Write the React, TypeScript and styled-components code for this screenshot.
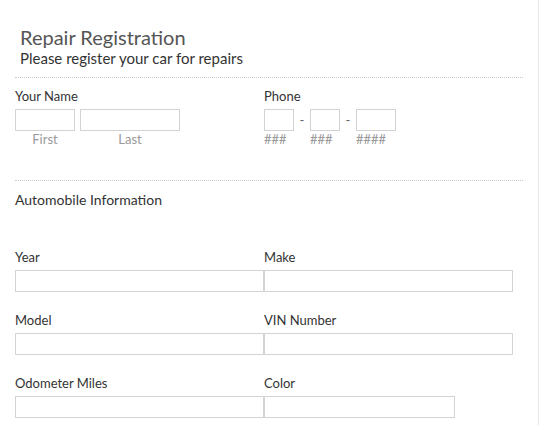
import React from "react";
import styled, { createGlobalStyle } from "styled-components";

const Global = createGlobalStyle`
  html, body { margin: 0; padding: 0; background: #fff; }
  body { font-family: Lato, "Open Sans", Arial, sans-serif; color: #333; }
  * { box-sizing: border-box; }
`;

const Page = styled.div`
  width: 539px;
  min-height: 425px;
  border-right: 1px solid #e6e6e6;
  padding-left: 15px;
`;

const Form = styled.form`
  width: 508px;
`;

const Header = styled.header`
  padding: 24px 0 10px 5px;
  border-bottom: 1px dotted #c8c8c8;
`;

const Title = styled.h1`
  margin: 0;
  font-size: 20px;
  line-height: 26px;
  font-weight: 400;
  color: #555;
`;

const Subtitle = styled.p`
  margin: 0;
  font-size: 15px;
  line-height: 17px;
  color: #333;
`;

const Section = styled.section<{ $divider?: boolean }>`
  padding-top: 10px;
  padding-bottom: ${(p) => (p.$divider ? "33px" : "0")};
  border-bottom: ${(p) => (p.$divider ? "1px dotted #c8c8c8" : "none")};
`;

const Grid = styled.div`
  display: grid;
  grid-template-columns: 249px 249px;
`;

const Field = styled.div``;

const Label = styled.label`
  display: block;
  font-size: 13px;
  line-height: 16px;
  color: #333;
  margin-bottom: 5px;
`;

const Heading = styled.h2`
  margin: 0 0 41px;
  font-size: 14px;
  line-height: 17px;
  font-weight: 400;
  color: #333;
`;

const Input = styled.input<{ $w?: number }>`
  display: block;
  width: ${(p) => (p.$w ? `${p.$w}px` : "100%")};
  height: 22px;
  border: 1px solid #d3d3d3;
  padding: 0 4px;
  margin: 0;
  font: inherit;
  background: #fff;
  outline: none;
`;

const Parts = styled.div`
  display: flex;
  align-items: flex-start;
`;

const Part = styled.div<{ $center?: boolean }>`
  display: flex;
  flex-direction: column;
  align-items: ${(p) => (p.$center ? "center" : "flex-start")};
`;

const Sub = styled.span`
  font-size: 13px;
  line-height: 16px;
  color: #9a9a9a;
`;

const Dash = styled.span`
  width: 16px;
  height: 22px;
  line-height: 22px;
  text-align: center;
  font-size: 13px;
  color: #666;
`;

const Gap = styled.span`
  width: 5px;
`;

const Row = styled.div`
  display: grid;
  grid-template-columns: 249px 249px;
  margin-bottom: 20px;
`;

export default function App() {
  return (
    <>
      <Global />
      <Page>
        <Form>
          <Header>
            <Title>Repair Registration</Title>
            <Subtitle>Please register your car for repairs</Subtitle>
          </Header>
          <Section $divider>
            <Grid>
              <Field>
                <Label>Your Name</Label>
                <Parts>
                  <Part $center>
                    <Input $w={60} />
                    <Sub>First</Sub>
                  </Part>
                  <Gap />
                  <Part $center>
                    <Input $w={100} />
                    <Sub>Last</Sub>
                  </Part>
                </Parts>
              </Field>
              <Field>
                <Label>Phone</Label>
                <Parts>
                  <Part>
                    <Input $w={30} />
                    <Sub>###</Sub>
                  </Part>
                  <Dash>-</Dash>
                  <Part>
                    <Input $w={30} />
                    <Sub>###</Sub>
                  </Part>
                  <Dash>-</Dash>
                  <Part>
                    <Input $w={40} />
                    <Sub>####</Sub>
                  </Part>
                </Parts>
              </Field>
            </Grid>
          </Section>
          <Section>
            <Heading>Automobile Information</Heading>
            <Row>
              <Field>
                <Label>Year</Label>
                <Input />
              </Field>
              <Field>
                <Label>Make</Label>
                <Input />
              </Field>
            </Row>
            <Row>
              <Field>
                <Label>Model</Label>
                <Input />
              </Field>
              <Field>
                <Label>VIN Number</Label>
                <Input />
              </Field>
            </Row>
            <Row>
              <Field>
                <Label>Odometer Miles</Label>
                <Input />
              </Field>
              <Field>
                <Label>Color</Label>
                <Input $w={191} />
              </Field>
            </Row>
          </Section>
        </Form>
      </Page>
    </>
  );
}
